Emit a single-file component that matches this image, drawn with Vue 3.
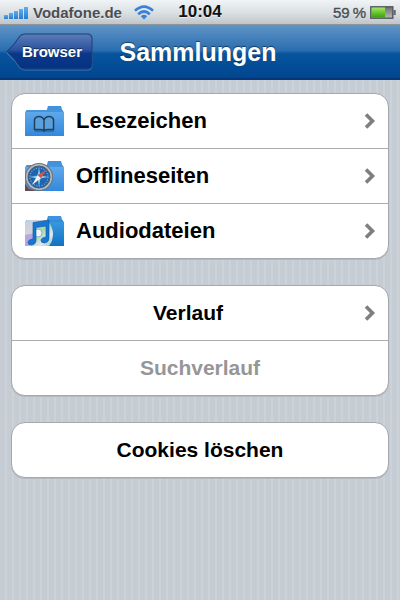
<script setup>
import { ref } from 'vue';

const folders = ref([
  { id: 'bookmarks', label: 'Lesezeichen' },
  { id: 'offline', label: 'Offlineseiten' },
  { id: 'audio', label: 'Audiodateien' },
]);

const signalBars = [4, 6, 8, 10, 12];
</script>

<template>
  <div class="screen">
    <header>
      <div class="status">
        <div class="status-side">
          <svg class="signal" width="24" height="13" viewBox="0 0 24 13" aria-hidden="true">
            <rect
              v-for="(h, i) in signalBars"
              :key="i"
              :x="i * 5"
              :y="13 - h"
              width="4"
              :height="h"
              fill="url(#signalFill)"
            />
            <defs>
              <linearGradient id="signalFill" x1="0" y1="0" x2="0" y2="1">
                <stop offset="0" stop-color="#5cb0f0" />
                <stop offset="1" stop-color="#2a7ad0" />
              </linearGradient>
            </defs>
          </svg>
          <span class="carrier">Vodafone.de</span>
          <svg class="wifi" width="20" height="15" viewBox="0 0 20 15" aria-hidden="true">
            <g fill="none" stroke="#3a80d6" stroke-width="2.7">
              <path d="M1 5.8 Q10 -2.6 19 5.8" />
              <path d="M4.2 9.2 Q10 3.8 15.8 9.2" />
            </g>
            <path d="M6.8 11.2 Q10 8.4 13.2 11.2 L10 14.6 Z" fill="#3a80d6" />
          </svg>
        </div>
        <span class="time">10:04</span>
        <div class="status-side right">
          <span class="percent">59&#8201;%</span>
          <svg width="26" height="13" viewBox="0 0 26 13" aria-hidden="true">
            <defs>
              <linearGradient id="batteryGreen" x1="0" y1="0" x2="0" y2="1">
                <stop offset="0" stop-color="#a5e56b" />
                <stop offset="0.45" stop-color="#6fcb35" />
                <stop offset="1" stop-color="#3c9d10" />
              </linearGradient>
              <linearGradient id="batteryGray" x1="0" y1="0" x2="0" y2="1">
                <stop offset="0" stop-color="#6b6d70" />
                <stop offset="1" stop-color="#b9bcbf" />
              </linearGradient>
            </defs>
            <rect x="0.8" y="0.8" width="22" height="11.4" fill="url(#batteryGray)" stroke="#55585a" stroke-width="1.4" />
            <rect x="1.5" y="1.5" width="13.5" height="10" fill="url(#batteryGreen)" />
            <path d="M23.5 4 h2.2 v5 h-2.2 z" fill="#626568" />
          </svg>
        </div>
      </div>

      <nav class="navbar">
        <div class="nav-side">
          <button type="button" class="back">
            <svg class="back-shape" viewBox="0 0 87 38" preserveAspectRatio="none" aria-hidden="true">
              <defs>
                <linearGradient id="backFill" x1="0" y1="0" x2="0" y2="1">
                  <stop offset="0" stop-color="#5c7db8" />
                  <stop offset="0.46" stop-color="#2a529e" />
                  <stop offset="0.56" stop-color="#0b3788" />
                  <stop offset="1" stop-color="#053382" />
                </linearGradient>
              </defs>
              <path
                d="M19 2 H81 Q86 2 86 7 V31 Q86 36 81 36 H19 Q16 36 14 34 Q9 26 1 19 Q9 12 14 4 Q16 2 19 2 Z"
                fill="none"
                stroke="#3f78b8"
                transform="translate(0 1)"
              />
              <path
                d="M19 1 H81 Q86 1 86 6 V31 Q86 36 81 36 H19 Q16 36 14 34 Q9 26 1 18.5 Q9 11 14 3 Q16 1 19 1 Z"
                fill="url(#backFill)"
                stroke="#1d4078"
              />
            </svg>
            <span class="back-label">Browser</span>
          </button>
        </div>
        <h1>Sammlungen</h1>
        <div class="nav-side"></div>
      </nav>
    </header>

    <main>
      <ul class="group">
        <li v-for="folder in folders" :key="folder.id">
          <button type="button" class="row folder-row">
            <svg class="folder" width="40" height="32" viewBox="0 0 40 32" aria-hidden="true">
              <defs>
                <linearGradient :id="'fill-' + folder.id" x1="0" y1="0" x2="0" y2="1">
                  <stop offset="0" :stop-color="folder.id === 'audio' ? '#3a9be0' : '#62abec'" />
                  <stop offset="1" :stop-color="folder.id === 'audio' ? '#1272c4' : '#3488dc'" />
                </linearGradient>
              </defs>
              <path d="M22.5 6 L24 1 H37 L38.5 6 V9 H22.5 Z" fill="#3f92dd" />
              <path d="M1 7 L3 5 H38 L40 7 V31 H1 Z" :fill="'url(#fill-' + folder.id + ')'" />
              <path d="M2 6 H39" stroke="#2f7fc9" stroke-width="1" />

              <template v-if="folder.id === 'bookmarks'">
                <path
                  d="M20 25 V15 Q18.5 11.5 15 11.5 Q11.5 11.5 10.5 14.5 V24.5 H16 Q19 24.5 20 25.5 Q21 24.5 24 24.5 H29.5 V14.5 Q28.5 11.5 25 11.5 Q21.5 11.5 20 15"
                  fill="#5ba0dc"
                  stroke="#20405c"
                  stroke-width="1.5"
                  stroke-linejoin="round"
                />
                <path d="M10.5 26 H18 L20 27 L22 26 H30" fill="none" stroke="#2c5273" />
              </template>

              <template v-else-if="folder.id === 'offline'">
                <path d="M1 24 L5 29 L12 31 H1 Z" fill="#6b4c43" />
                <circle cx="15" cy="17" r="14" fill="#6c737b" />
                <circle cx="15" cy="17" r="13" fill="#b4bbc3" />
                <circle cx="15" cy="17" r="11" fill="#1d65ad" stroke="#4c6077" />
                <circle cx="15" cy="17" r="9" fill="none" stroke="#a5d4f5" stroke-dasharray="1 1.6" />
                <path d="M15 7.5 L16.5 15.5 L24.5 17 L16.5 18.5 L15 26.5 L13.5 18.5 L5.5 17 L13.5 15.5 Z" fill="#8fc3ea" />
                <path d="M23 9.5 L16.8 18.3 L13.5 15.3 Z" fill="#d65449" />
                <path d="M8 25 L13.5 15.3 L16.8 18.3 Z" fill="#f2f5f8" />
              </template>

              <template v-else>
                <defs>
                  <linearGradient id="discFill" x1="0" y1="0" x2="1" y2="1">
                    <stop offset="0" stop-color="#b7d3df" />
                    <stop offset="0.3" stop-color="#d9d1dc" />
                    <stop offset="0.5" stop-color="#a4d69d" />
                    <stop offset="0.75" stop-color="#e3e5f4" />
                    <stop offset="1" stop-color="#8ccf95" />
                  </linearGradient>
                </defs>
                <path d="M1 7 L3 5 H23 Q29 12 29 19 Q29 26 25 31 H1 Z" fill="url(#discFill)" />
                <path d="M1 20 L13 18 L5 31 H1 Z" fill="#b8a7df" />
                <circle cx="14" cy="18" r="4" fill="#eff6f8" stroke="#81b7ca" />
                <path
                  d="M9 7.5 L25 5 V23 Q25 27.5 20.5 28 Q17 28 17 25.5 Q17 22.5 22 22 V11 L12 12.5 V25 Q12 29.5 7.5 30 Q4 30 4 27.5 Q4 24.5 9 24 Z"
                  fill="#1676d2"
                  stroke="#0c58a8"
                  stroke-width="0.6"
                />
              </template>
            </svg>
            <span class="label">{{ folder.label }}</span>
            <svg class="chevron" width="12" height="16" viewBox="0 0 12 16" aria-hidden="true">
              <path d="M2 1.5 L8.5 8 L2 14.5" />
            </svg>
          </button>
        </li>
      </ul>

      <ul class="group">
        <li>
          <button type="button" class="row action">
            <span class="label">Verlauf</span>
            <svg class="chevron" width="12" height="16" viewBox="0 0 12 16" aria-hidden="true">
              <path d="M2 1.5 L8.5 8 L2 14.5" />
            </svg>
          </button>
        </li>
        <li>
          <button type="button" class="row action" disabled>
            <span class="label">Suchverlauf</span>
          </button>
        </li>
      </ul>

      <ul class="group">
        <li>
          <button type="button" class="row action">
            <span class="label">Cookies löschen</span>
          </button>
        </li>
      </ul>
    </main>
  </div>
</template>

<style>
body {
  margin: 0;
}
</style>

<style scoped>
.screen {
  min-height: 100vh;
  font-family: 'Liberation Sans', Arial, Helvetica, sans-serif;
  background: repeating-linear-gradient(to right, #c5ccd4 0 5px, #cbd2d8 5px 7px);
}

.status {
  display: flex;
  align-items: center;
  height: 25px;
  box-sizing: border-box;
  padding: 0 4px;
  border-bottom: 1px solid #8d959b;
  background: linear-gradient(#f0f4f6, #dce1e4 50%, #bfc6ca);
  font-size: 15px;
  font-weight: bold;
  color: #4b4f53;
  text-shadow: 0 1px 0 rgba(255, 255, 255, 0.6);
}

.status-side {
  display: flex;
  flex: 1;
  align-items: center;
}

.carrier {
  margin: 0 12px 0 5px;
}

.right {
  justify-content: flex-end;
  gap: 4px;
}

.percent {
  font-weight: normal;
  -webkit-text-stroke: 0.4px #4b4f53;
}

.time {
  font-size: 17px;
  color: #111;
}

.navbar {
  display: flex;
  align-items: center;
  height: 55px;
  box-sizing: border-box;
  padding: 0 10px 0 6px;
  border-bottom: 2px solid #04367c;
  background: linear-gradient(#6094c6, #2a6eb0 48%, #07549e 54%, #00468e);
}

.nav-side {
  flex: 1;
}

.back {
  position: relative;
  height: 38px;
  padding: 0 11px 0 16px;
  border: 0;
  background: none;
  font: bold 15px 'Liberation Sans', Arial, sans-serif;
  color: #fff;
  text-shadow: 0 -1px 0 rgba(0, 0, 0, 0.5);
}

.back-shape {
  position: absolute;
  inset: 0;
  width: 100%;
  height: 100%;
}

.back-label {
  position: relative;
}

h1 {
  margin: 0;
  font-size: 25px;
  line-height: 32px;
  color: #fff;
  text-shadow: 0 -1px 1px rgba(0, 0, 0, 0.5);
}

main {
  display: flex;
  flex-direction: column;
  gap: 26px;
  padding: 13px 11px;
}

.group {
  margin: 0;
  padding: 0;
  overflow: hidden;
  list-style: none;
  background: #fff;
  border: 1px solid #a5a9ad;
  border-radius: 14px;
  box-shadow: 0 1px 0 #b4b9be;
}

.group li + li {
  border-top: 1px solid #ababab;
}

.row {
  display: flex;
  align-items: center;
  width: 100%;
  height: 54px;
  padding: 0 12px;
  border: 0;
  background: none;
  font: bold 21px 'Liberation Sans', Arial, sans-serif;
  color: #000;
}

.folder-row {
  font-size: 22px;
}

.folder {
  margin-right: 12px;
}

.label {
  flex: 1;
  text-align: left;
}

.action .label {
  text-align: center;
}

.row:disabled {
  color: #969696;
}

.chevron {
  margin-left: 12px;
}

.chevron path {
  fill: none;
  stroke: #7f7f7f;
  stroke-width: 3.6;
}
</style>
